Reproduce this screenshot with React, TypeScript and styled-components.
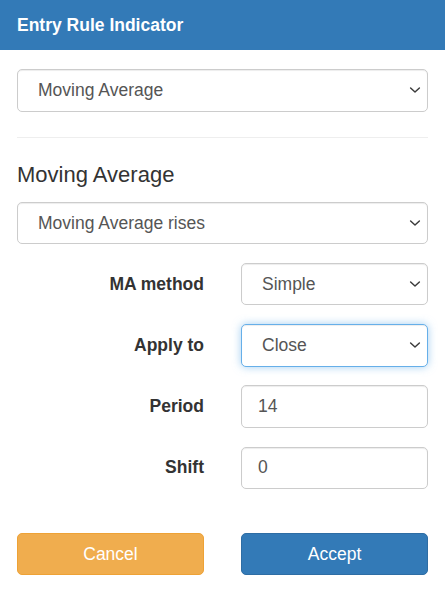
import React from "react";
import styled, { createGlobalStyle, css } from "styled-components";

const GlobalStyle = createGlobalStyle`
  html, body {
    margin: 0;
    padding: 0;
    background: #fff;
  }
  body {
    font-family: "Liberation Sans", Arial, Helvetica, sans-serif;
    font-size: 17.5px;
    color: #333;
  }
  * { box-sizing: border-box; }
`;

const Dialog = styled.div`
  width: 445px;
  display: flex;
  flex-direction: column;
`;

const Header = styled.div`
  height: 50px;
  background: #337ab7;
  color: #fff;
  font-weight: bold;
  font-size: 17.5px;
  display: flex;
  align-items: center;
  padding: 0 17px;
`;

const Body = styled.div`
  display: flex;
  flex-direction: column;
  padding: 19px 17px 0 17px;
`;

const controlBase = css<{ $focused?: boolean }>`
  display: block;
  width: 100%;
  height: 42.5px;
  font-family: "Liberation Sans", Arial, Helvetica, sans-serif;
  font-size: 17.5px;
  color: #555;
  background-color: #fff;
  border: 1px solid #ccc;
  border-radius: 5px;
  box-shadow: inset 0 1px 1px rgba(0, 0, 0, 0.075);
  outline: none;
  ${(p) =>
    p.$focused &&
    css`
      border-color: #66afe9;
      box-shadow: inset 0 1px 1px rgba(0, 0, 0, 0.075),
        0 0 8px rgba(102, 175, 233, 0.6);
    `}
`;

const SelectWrap = styled.div`
  position: relative;
  width: 100%;
`;

const NativeSelect = styled.select<{ $focused?: boolean }>`
  ${controlBase}
  appearance: none;
  -webkit-appearance: none;
  padding: 0 30px 0 20px;
`;

const Chevron = styled.svg`
  position: absolute;
  right: 7px;
  top: 50%;
  width: 12px;
  height: 8px;
  margin-top: -4px;
  pointer-events: none;
`;

const Input = styled.input<{ $focused?: boolean }>`
  ${controlBase}
  padding: 0 16px;
`;

const Divider = styled.hr`
  margin: 25px 0 24px 0;
  border: 0;
  border-top: 1px solid #eee;
  height: 0;
`;

const SectionTitle = styled.h4`
  margin: 0 0 15px 0;
  font-size: 22px;
  font-weight: normal;
  line-height: 25px;
  color: #333;
`;

const Group = styled.div`
  margin-bottom: 18.75px;
`;

const Row = styled.div`
  display: grid;
  grid-template-columns: 1fr 1fr;
  column-gap: 37px;
  align-items: center;
  margin-bottom: 18.75px;
`;

const Label = styled.label`
  text-align: right;
  font-weight: bold;
  font-size: 17.5px;
  color: #333;
`;

const Buttons = styled.div`
  display: grid;
  grid-template-columns: 1fr 1fr;
  column-gap: 37px;
  margin-top: 25px;
`;

const Button = styled.button<{ $variant: "warning" | "primary" }>`
  height: 42.5px;
  border-radius: 5px;
  font-family: "Liberation Sans", Arial, Helvetica, sans-serif;
  font-size: 17.5px;
  color: #fff;
  cursor: pointer;
  border: 1px solid
    ${(p) => (p.$variant === "warning" ? "#eea236" : "#2e6da4")};
  background: ${(p) => (p.$variant === "warning" ? "#f0ad4e" : "#337ab7")};
`;

function Select({
  value,
  label,
  focused,
}: {
  value: string;
  label: string;
  focused?: boolean;
}) {
  return (
    <SelectWrap>
      <NativeSelect defaultValue={value} $focused={focused}>
        <option value={value}>{label}</option>
      </NativeSelect>
      <Chevron viewBox="0 0 12 8">
        <polyline
          points="1.6,2 6,6 10.4,2"
          fill="none"
          stroke="#3a3a3a"
          strokeWidth="1.45"
          strokeLinecap="round"
          strokeLinejoin="round"
        />
      </Chevron>
    </SelectWrap>
  );
}

export default function App() {
  return (
    <>
      <GlobalStyle />
      <Dialog>
        <Header>Entry Rule Indicator</Header>
        <Body>
          <Select value="ma" label="Moving Average" />
          <Divider />
          <SectionTitle>Moving Average</SectionTitle>
          <Group>
            <Select value="rises" label="Moving Average rises" />
          </Group>
          <Row>
            <Label>MA method</Label>
            <Select value="simple" label="Simple" />
          </Row>
          <Row>
            <Label>Apply to</Label>
            <Select value="close" label="Close" focused />
          </Row>
          <Row>
            <Label>Period</Label>
            <Input defaultValue="14" />
          </Row>
          <Row>
            <Label>Shift</Label>
            <Input defaultValue="0" />
          </Row>
          <Buttons>
            <Button $variant="warning">Cancel</Button>
            <Button $variant="primary">Accept</Button>
          </Buttons>
        </Body>
      </Dialog>
    </>
  );
}
